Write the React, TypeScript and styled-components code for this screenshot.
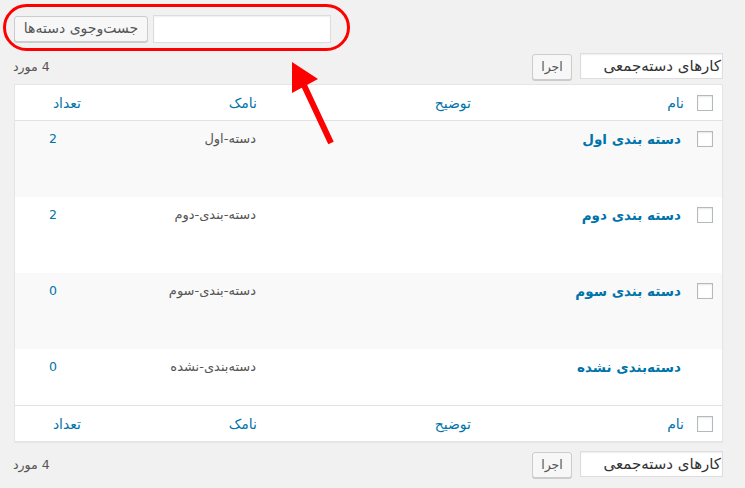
import React from "react";
import styled, { createGlobalStyle } from "styled-components";

const GlobalStyle = createGlobalStyle`
  html, body {
    margin: 0;
    padding: 0;
    background: #f1f1f1;
  }
  body {
    direction: rtl;
    font-family: Tahoma, "DejaVu Sans", sans-serif;
    font-size: 13px;
    color: #444;
  }
`;

const Page = styled.div`
  position: relative;
  width: 745px;
  height: 488px;
  overflow: hidden;
  box-sizing: border-box;
  padding: 15px 22px 0 14px;
`;

const SearchBox = styled.div`
  display: flex;
  justify-content: flex-end;
  gap: 5px;
  height: 28px;
`;

const SearchInput = styled.input`
  box-sizing: border-box;
  width: 178px;
  height: 28px;
  margin: 0;
  border: 1px solid #ddd;
  background: #fff;
  box-shadow: inset 0 1px 2px rgba(0, 0, 0, 0.07);
  outline: none;
  font: inherit;
`;

const Button = styled.button<{ $w: number; $fs?: number }>`
  box-sizing: border-box;
  width: ${({ $w }) => $w}px;
  height: 26px;
  margin-top: 1px;
  padding: 0 4px 2px;
  border: 1px solid #ccc;
  border-radius: 3px;
  background: #f7f7f7;
  box-shadow: 0 1px 0 #ccc;
  color: #555;
  font-family: Tahoma, "DejaVu Sans", sans-serif;
  font-size: ${({ $fs }) => $fs ?? 12.5}px;
  white-space: nowrap;
  cursor: pointer;
`;

const TableNav = styled.div<{ $top: number }>`
  display: flex;
  align-items: flex-start;
  justify-content: space-between;
  height: 27px;
  margin-top: ${({ $top }) => $top}px;
`;

const Actions = styled.div`
  display: flex;
  gap: 8px;
  align-items: flex-start;
`;

const BulkSelect = styled.div`
  box-sizing: border-box;
  width: 143px;
  height: 26px;
  padding: 2px 1px 0 0;
  border: 1px solid #ddd;
  background: #fff;
  box-shadow: inset 0 1px 2px rgba(0, 0, 0, 0.07);
  color: #333;
  font-size: 15px;
  line-height: 20px;
  white-space: nowrap;
  overflow: hidden;
`;

const Count = styled.div`
  padding-top: 6px;
  color: #555;
  font-size: 12.5px;
  line-height: 16px;
  margin-left: -1px;
`;

const Table = styled.div`
  margin-top: 4px;
  border: 1px solid #e5e5e5;
  background: #fff;
  box-shadow: 0 1px 1px rgba(0, 0, 0, 0.04);
`;

const Row = styled.div<{ $h: number; $alt?: boolean; $head?: boolean; $foot?: boolean }>`
  display: grid;
  grid-template-columns: 32px 210px 214px 178px 73px;
  height: ${({ $h }) => $h}px;
  box-sizing: border-box;
  background: ${({ $alt }) => ($alt ? "#f9f9f9" : "#fff")};
  border-bottom: ${({ $head }) => ($head ? "1px solid #e1e1e1" : "none")};
  border-top: ${({ $foot }) => ($foot ? "1px solid #e1e1e1" : "none")};
`;

const CheckCell = styled.div<{ $top: number }>`
  padding: ${({ $top }) => $top}px 9px 0 0;
`;

const Check = styled.span`
  display: block;
  width: 16px;
  height: 16px;
  box-sizing: border-box;
  border: 1px solid #b4b9be;
  background: #fff;
  box-shadow: inset 0 1px 2px rgba(0, 0, 0, 0.1);
`;

const HeadCell = styled.div<{ $pr: number }>`
  padding: 8px ${({ $pr }) => $pr}px 0 0;
  color: #0073aa;
  font-size: 14px;
  line-height: 20px;
`;

const NameCell = styled.div`
  padding: 8px 9px 0 0;
  color: #0073aa;
  font-weight: bold;
  font-size: 13.5px;
  line-height: 20px;
  white-space: nowrap;
`;

const SlugCell = styled.div`
  padding: 8px 10px 0 0;
  color: #555;
  font-size: 13px;
  line-height: 20px;
  white-space: nowrap;
`;

const CountCell = styled.div`
  padding-top: 8px;
  text-align: center;
  color: #0073aa;
  font-size: 12.5px;
  line-height: 20px;
  width: 70px;
  margin-left: -3px;
`;

const Overlay = styled.svg`
  position: absolute;
  left: 0;
  top: 0;
  pointer-events: none;
`;

const terms = [
  { name: "دسته بندی اول", slug: "دسته-اول", count: 2, check: true },
  { name: "دسته بندی دوم", slug: "دسته-بندی-دوم", count: 2, check: true },
  { name: "دسته بندی سوم", slug: "دسته-بندی-سوم", count: 0, check: true },
  { name: "دسته‌بندی نشده", slug: "دسته‌بندی-نشده", count: 0, check: false },
];

function HeaderRow({ foot }: { foot?: boolean }) {
  return (
    <Row $h={foot ? 36 : 36} $head={!foot} $foot={foot}>
      <CheckCell $top={10}>
        <Check />
      </CheckCell>
      <HeadCell $pr={6}>نام</HeadCell>
      <HeadCell $pr={9}>توضیح</HeadCell>
      <HeadCell $pr={9}>نامک</HeadCell>
      <HeadCell $pr={7}>تعداد</HeadCell>
    </Row>
  );
}

function BulkActions({ top }: { top: number }) {
  return (
    <TableNav $top={top}>
      <Actions>
        <BulkSelect>کارهای دسته‌جمعی</BulkSelect>
        <Button $w={40}>اجرا</Button>
      </Actions>
      <Count>4 مورد</Count>
    </TableNav>
  );
}

export default function App() {
  return (
    <>
      <GlobalStyle />
      <Page>
        <SearchBox>
          <SearchInput type="search" />
          <Button $w={134} $fs={14}>
            جست‌وجوی دسته‌ها
          </Button>
        </SearchBox>

        <BulkActions top={10} />

        <Table>
          <HeaderRow />
          {terms.map((t, i) => (
            <Row key={t.slug} $h={i === 3 ? 56 : 76} $alt={i % 2 === 0}>
              <CheckCell $top={10}>{t.check && <Check />}</CheckCell>
              <NameCell>{t.name}</NameCell>
              <div />
              <SlugCell>{t.slug}</SlugCell>
              <CountCell>{t.count}</CountCell>
            </Row>
          ))}
          <HeaderRow foot />
        </Table>

        <BulkActions top={9} />

        <Overlay width="745" height="488" viewBox="0 0 745 488">
          <rect x="4.5" y="5.5" width="344" height="44" rx="22" fill="none" stroke="#ff0000" strokeWidth="3" />
          <line x1="331" y1="143" x2="302" y2="81" stroke="#ff0000" strokeWidth="6" />
          <polygon points="292,62 292,93 318,79" fill="#ff0000" />
        </Overlay>
      </Page>
    </>
  );
}
